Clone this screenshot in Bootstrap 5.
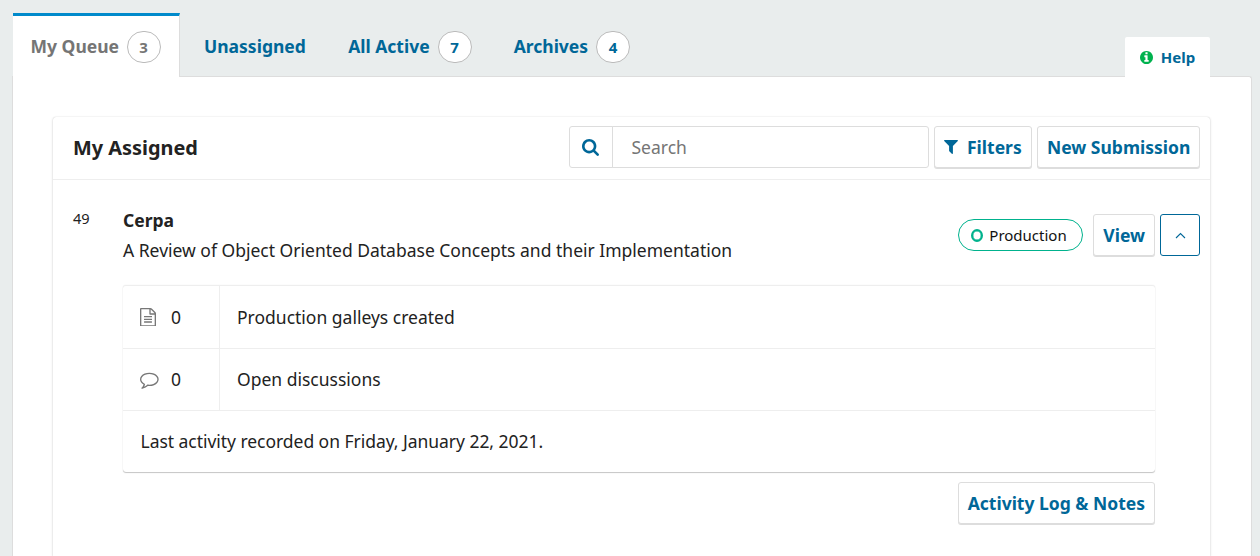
<!DOCTYPE html>
<html lang="en">
<head>
<meta charset="utf-8">
<meta name="viewport" content="width=device-width, initial-scale=1">
<title>Submissions</title>
<link href="https://cdn.jsdelivr.net/npm/bootstrap@5.3.0/dist/css/bootstrap.min.css" rel="stylesheet">
<style>
  html, body { height: 100%; }
  body { font-family: "Noto Sans", sans-serif; font-size: 17.5px; line-height: 25px; color: #222; background: #e9eded; overflow: hidden; padding: 13px 8px 0 12px; }
  svg { display: block; fill: currentColor; flex: none; }
  .top-bar { height: 63px; }
  .queue-tabs { height: 63px; gap: 7px; border: 0; flex-wrap: nowrap; }
  .queue-tabs .nav-link { height: 63px; border: 0; border-radius: 0; padding: 4px 17.5px 0; color: #006798; font-weight: 700; display: flex; align-items: center; white-space: nowrap; }
  .queue-tabs .nav-link.active { height: 64px; background: #fff; color: #757575; border-top: 3px solid #008acb; border-right: 1px solid #ddd; padding: 0 0 0 17.5px; margin-left: 1px; width: 167px; position: relative; }
  .queue-tabs .nav-link.plain { padding-left: 17px; padding-right: 17.8px; }
  .count { width: 34px; height: 32px; margin-left: 8px; border: 1px solid #bbb; border-radius: 16px; background: #fff; font-size: 15px; padding-top: 1px; flex: none; }
  .active .count { margin-left: 7.5px; }
  .help-tab { width: 85px; height: 40px; margin: 24px 42px 0 0; background: #fff; border-radius: 2px 2px 0 0; color: #006798; font-weight: 700; font-size: 15px; position: relative; gap: 8px; }
  .sheet { height: 480px; background: #fff; border: 1px solid #ddd; border-bottom: 0; border-radius: 0 3px 0 0; padding: 40px 41px 0 40px; }
  .panel { height: 439px; border-radius: 3px 3px 0 0; box-shadow: 0 0 1px rgba(0,0,0,.22), 0 1px 3px rgba(0,0,0,.16); }
  .panel-top { height: 63px; padding: 9px 10px 0 20px; border-bottom: 1px solid #eee; gap: 5px; }
  .panel-top h1 { font-size: 19.9px; line-height: 43px; font-weight: 700; margin: 0 auto 0 0; }
  .search-box { width: 360px; height: 42px; }
  .search-box .input-group-text { width: 44px; padding: 0 1px 0 0; background: #fff; border-color: #ddd; border-radius: 3px; color: #006798; }
  .search-box .form-control { font-size: 17.5px; line-height: 25px; padding: 0 18.5px; border-color: #ddd; border-radius: 3px; }
  .search-box .form-control::placeholder { color: #757575; }
  .btn-ojs { height: 42px; padding: 0 9px; --bs-btn-font-size: 17.5px; --bs-btn-font-weight: 700; --bs-btn-color: #006798; --bs-btn-bg: #fff; --bs-btn-border-color: #ddd; --bs-btn-border-radius: 3px; line-height: 40px; box-shadow: 0 1px 0 #ddd; white-space: nowrap; }
  .btn-filter { width: 98px; gap: 9px; }
  .btn-submit { width: 163px; }
  .btn-toggle { width: 40px; border-color: #006798; box-shadow: none; }
  .item-id { width: 50px; font-size: 14.6px; padding-top: 26px; }
  .item-title { padding-top: 28px; }
  .item-title .title { margin-top: 5px; }
  .item-actions { padding: 34px 10px 0 0; gap: 5px; }
  .stage { width: 125px; height: 32px; border: 1px solid #00b28d; border-radius: 16px; font-size: 15px; color: #111; margin: 5px 5px 0 0; padding-left: 12px; gap: 6px; }
  .ring { width: 12px; height: 13px; border: 2px solid #00b28d; border-radius: 50%; box-shadow: inset 0 0 0 .4px #00b28d; }
  .details { width: 1032px; height: 187px; margin: 22px 0 0 70px; border-radius: 3px; border-top: 1px solid #eee; box-shadow: 0 0 1px rgba(0,0,0,.15), 0 1px 1px rgba(0,0,0,.22); }
  .detail-row { height: 62px; border-bottom: 1px solid #eee; }
  .detail-row:first-child { height: 63px; }
  .detail-row:last-child { border: 0; padding-left: 17.5px; height: 61px; letter-spacing: -.04px; }
  .detail-count { width: 97px; height: 100%; padding-left: 17px; border-right: 1px solid #eee; }
  .detail-icon { width: 31px; color: #777; }
  .detail-label { padding-left: 17px; }
  .log-row { padding: 10px 55px 0 0; }
</style>
</head>
<body>
<header class="top-bar d-flex justify-content-between">
  <ul class="nav nav-tabs queue-tabs">
    <li class="nav-item"><a class="nav-link active">My Queue<span class="count d-flex align-items-center justify-content-center">3</span></a></li>
    <li class="nav-item"><a class="nav-link plain">Unassigned</a></li>
    <li class="nav-item"><a class="nav-link">All Active<span class="count d-flex align-items-center justify-content-center">7</span></a></li>
    <li class="nav-item"><a class="nav-link">Archives<span class="count d-flex align-items-center justify-content-center">4</span></a></li>
  </ul>
  <a class="help-tab d-flex align-items-center justify-content-center text-decoration-none"><svg width="13" height="13" viewBox="128 128 1536 1536" style="color:#00b24e"><path d="M1152 1376v-160q0-14-9-23t-23-9h-96v-512q0-14-9-23t-23-9h-320q-14 0-23 9t-9 23v160q0 14 9 23t23 9h96v320h-96q-14 0-23 9t-9 23v160q0 14 9 23t23 9h448q14 0 23-9t9-23zm-128-896v-160q0-14-9-23t-23-9h-192q-14 0-23 9t-9 23v160q0 14 9 23t23 9h192q14 0 23-9t9-23zm640 416q0 209-103 385.5t-279.5 279.5-385.5 103-385.5-103-279.5-279.5-103-385.5 103-385.5 279.5-279.5 385.5-103 385.5 103 279.5 279.5 103 385.5z"/></svg>Help</a>
</header>
<main class="sheet">
  <section class="panel">
    <div class="panel-top d-flex align-items-start">
      <h1>My Assigned</h1>
      <div class="input-group search-box">
        <span class="input-group-text justify-content-center"><svg width="17" height="17" viewBox="0 0 1664 1664"><path d="M1152 704q0-185-131.5-316.5t-316.5-131.5-316.5 131.5-131.5 316.5 131.5 316.5 316.5 131.5 316.5-131.5 131.5-316.5zm512 832q0 52-38 90t-90 38q-54 0-90-38l-343-342q-179 124-399 124-143 0-273.5-55.5t-225-150-150-225-55.5-273.5 55.5-273.5 150-225 225-150 273.5-55.5 273.5 55.5 225 150 150 225 55.5 273.5q0 220-124 399l343 343q37 37 37 90z"/></svg></span>
        <input class="form-control" type="text" placeholder="Search" aria-label="Search">
      </div>
      <button class="btn btn-ojs btn-filter d-flex align-items-center"><svg width="14" height="14" viewBox="190 256 1412 1408"><path d="M1595 295q17 41-14 70l-493 493v742q0 42-39 59-13 5-25 5-27 0-45-19l-256-256q-19-19-19-45v-486l-493-493q-31-29-14-70 17-39 59-39h1280q42 0 59 39z"/></svg>Filters</button>
      <button class="btn btn-ojs btn-submit">New Submission</button>
    </div>
    <article>
      <div class="d-flex ps-3">
        <div class="item-id ms-1">49</div>
        <div class="item-title flex-grow-1"><div class="fw-bold">Cerpa</div><div class="title">A Review of Object Oriented Database Concepts and their Implementation</div></div>
        <div class="item-actions d-flex">
          <span class="stage d-flex align-items-center"><span class="ring"></span>Production</span>
          <button class="btn btn-ojs">View</button>
          <button class="btn btn-ojs btn-toggle d-flex align-items-center justify-content-center p-0" aria-label="Collapse"><svg width="11" height="7" viewBox="0 0 11 7"><path d="M1 6 5.5 1.5 10 6" fill="none" stroke="currentColor" stroke-width="1.1"/></svg></button>
        </div>
      </div>
      <div class="details">
        <div class="detail-row d-flex align-items-center">
          <div class="detail-count d-flex align-items-center"><span class="detail-icon"><svg width="16" height="18.7" viewBox="128 0 1536 1792"><path d="M1596 380q28 28 48 76t20 88v1152q0 40-28 68t-68 28h-1344q-40 0-68-28t-28-68v-1600q0-40 28-68t68-28h896q40 0 88 20t76 48zm-444-244v376h376q-10-29-22-41l-313-313q-12-12-41-22zm384 1528v-1024h-416q-40 0-68-28t-28-68v-416h-768v1536h1280zm-1024-864q0-14 9-23t23-9h704q14 0 23 9t9 23v64q0 14-9 23t-23 9h-704q-14 0-23-9t-9-23v-64zm736 224q14 0 23 9t9 23v64q0 14-9 23t-23 9h-704q-14 0-23-9t-9-23v-64q0-14 9-23t23-9h704zm0 256q14 0 23 9t9 23v64q0 14-9 23t-23 9h-704q-14 0-23-9t-9-23v-64q0-14 9-23t23-9h704z"/></svg></span>0</div>
          <div class="detail-label">Production galleys created</div>
        </div>
        <div class="detail-row d-flex align-items-center">
          <div class="detail-count d-flex align-items-center"><span class="detail-icon"><svg width="18.7" height="18.7" viewBox="0 0 1792 1792"><path d="M896 384q-204 0-381.5 69.5t-282 187.5-104.5 255q0 112 71.5 213.5t201.5 175.5l87 50-27 96q-24 91-70 172 152-63 275-171l43-38 57 6q69 8 130 8 204 0 381.5-69.5t282-187.5 104.5-255-104.5-255-282-187.5-381.5-69.5zm896 512q0 174-120 321.5t-326 233-450 85.5q-70 0-145-8-198 175-460 242-49 14-114 22h-5q-15 0-27-10.5t-16-27.5v-1q-3-4-.5-12t2-10 4.5-9.5l6-9 7-8.5 8-9q7-8 31-34.5t34.5-38 31-39.5 32.5-51 27-59 26-76q-157-89-247.5-220t-90.5-281q0-174 120-321.5t326-233 450-85.5 450 85.5 326 233 120 321.5z"/></svg></span>0</div>
          <div class="detail-label">Open discussions</div>
        </div>
        <div class="detail-row d-flex align-items-center">Last activity recorded on Friday, January 22, 2021.</div>
      </div>
      <div class="log-row d-flex justify-content-end"><button class="btn btn-ojs">Activity Log &amp; Notes</button></div>
    </article>
  </section>
</main>
<script src="https://cdn.jsdelivr.net/npm/bootstrap@5.3.0/dist/js/bootstrap.bundle.min.js"></script>
</body>
</html>
